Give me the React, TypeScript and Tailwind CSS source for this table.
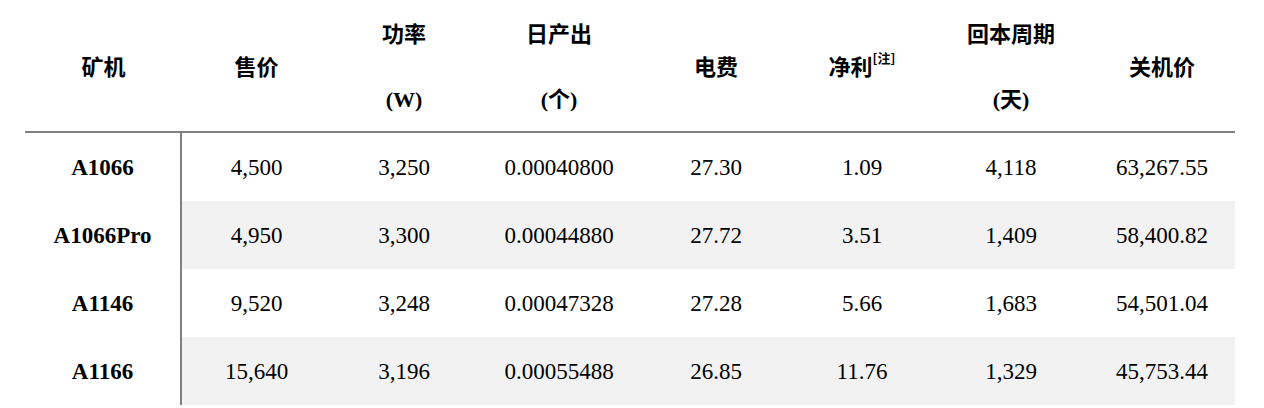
const cols = "grid grid-cols-[157px_149px_146px_164px_150px_142px_156px_146px]";

const rows = [
  ["A1066", "4,500", "3,250", "0.00040800", "27.30", "1.09", "4,118", "63,267.55"],
  ["A1066Pro", "4,950", "3,300", "0.00044880", "27.72", "3.51", "1,409", "58,400.82"],
  ["A1146", "9,520", "3,248", "0.00047328", "27.28", "5.66", "1,683", "54,501.04"],
  ["A1166", "15,640", "3,196", "0.00055488", "26.85", "11.76", "1,329", "45,753.44"],
];

const serif = "font-['Liberation_Serif','Noto_Sans_CJK_SC',serif]";

function Head({ top, bottom, children }: { top?: string; bottom?: string; children?: React.ReactNode }) {
  if (top) {
    return (
      <div className="flex flex-col items-center justify-center leading-[34px]">
        <span>{top}</span>
        <span>&nbsp;</span>
        <span className={serif}>{bottom}</span>
      </div>
    );
  }
  return <div className="flex items-center justify-center">{children}</div>;
}

export default function App() {
  return (
    <div className="bg-white w-[1264px] h-[408px] overflow-hidden text-black">
      <div className="ml-[25px] w-[1210px]">
        <div
          className={`${cols} h-[133px] border-b-2 border-[#808080] font-bold text-[22px] font-['Noto_Sans_CJK_SC',sans-serif]`}
        >
          <Head>矿机</Head>
          <Head>售价</Head>
          <Head top="功率" bottom="(W)" />
          <Head top="日产出" bottom="(个)" />
          <Head>电费</Head>
          <Head>
            <span>
              净利<sup className="text-[13px] font-bold align-[6px]">[注]</sup>
            </span>
          </Head>
          <Head top="回本周期" bottom="(天)" />
          <Head>关机价</Head>
        </div>
        {rows.map((r, i) => (
          <div key={r[0]} className={`${cols} h-[68px] text-[23px] ${serif}`}>
            <div className="flex items-center justify-center pt-[3px] font-bold bg-white border-r-2 border-[#808080]">
              {r[0]}
            </div>
            {r.slice(1).map((v, j) => (
              <div
                key={j}
                className={`flex items-center justify-center pt-[3px] ${i % 2 === 1 ? "bg-[#f2f2f2]" : "bg-white"}`}
              >
                {v}
              </div>
            ))}
          </div>
        ))}
      </div>
    </div>
  );
}
